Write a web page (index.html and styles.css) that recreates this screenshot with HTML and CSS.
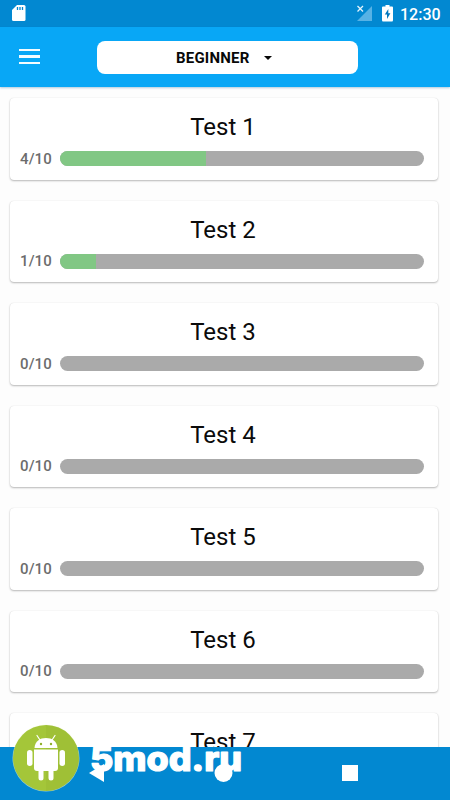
FILE: index.html
```html
<!DOCTYPE html>
<html lang="en">
<head>
<meta charset="utf-8">
<title>Tests</title>
<link rel="stylesheet" href="styles.css">
</head>
<body>
<div class="screen">
  <header class="status">
    <svg class="sd" width="14" height="17" viewBox="0 0 14 17"><path fill="#fff" d="M5 0h7a1.500 1.500 0 0 1 1.500 1.500v13a1.500 1.500 0 0 1-1.500 1.500H1.500A1.500 1.500 0 0 1 0 14.500V5z"/><path stroke="#0288d1" stroke-width="1.300" d="M5.500 2v3M8 2v3M10.500 2v3"/></svg>
    <svg class="signal" width="17" height="17" viewBox="0 0 17 17"><path fill="#57b2e5" d="M16 1v15H1z"/><path fill="#0288d1" d="M0 0h8v8H0z"/><path stroke="#e4f4fc" stroke-width="1.300" d="M1.500 1l5.500 5.500M7 1L1.500 6.500"/></svg>
    <svg class="battery" width="11" height="17" viewBox="0 0 11 17"><path fill="#fff" d="M3.500 0h4v1.500H10q1 0 1 1V15q0 1.500-1 1.500H1Q0 16.500 0 15V2.500q0-1 1-1h2.500z"/><path fill="#0277bd" d="M6.300 4L2.800 9.500H5V14l3.400-5.800H6.300z"/></svg>
    <span class="clock">12:30</span>
  </header>
  <div class="toolbar">
    <div class="burger"><i></i><i></i><i></i></div>
    <div class="level"><span>BEGINNER</span><b class="caret"></b></div>
  </div>
  <main class="list">
    <section class="card"><h2>Test 1</h2><div class="row"><span class="count">4/10</span><div class="bar"><div class="fill" style="width:40%"></div></div></div></section>
    <section class="card"><h2>Test 2</h2><div class="row"><span class="count">1/10</span><div class="bar"><div class="fill" style="width:10%"></div></div></div></section>
    <section class="card"><h2>Test 3</h2><div class="row"><span class="count">0/10</span><div class="bar"></div></div></section>
    <section class="card"><h2>Test 4</h2><div class="row"><span class="count">0/10</span><div class="bar"></div></div></section>
    <section class="card"><h2>Test 5</h2><div class="row"><span class="count">0/10</span><div class="bar"></div></div></section>
    <section class="card"><h2>Test 6</h2><div class="row"><span class="count">0/10</span><div class="bar"></div></div></section>
    <section class="card"><h2>Test 7</h2></section>
  </main>
  <nav class="nav">
    <svg width="450" height="53" viewBox="0 0 450 53"><path fill="#fff" d="M89 26l15-9v18z"/><circle cx="223.500" cy="26" r="9" fill="#fff"/><path fill="#fff" d="M342 18h16v16h-16z"/></svg>
  </nav>
  <div class="watermark">
    <svg class="robot" width="68" height="68" viewBox="0 0 68 68">
      <circle cx="34" cy="34" r="33.500" fill="#f4f8dc" opacity=".6"/>
      <circle cx="34" cy="34" r="33" fill="#a4c639"/>
      <path fill="#8fac2c" d="M34 1a33 33 0 0 1 0 66z" opacity=".22"/>
      <g fill="#fff"><path d="M22.500 24C23 17 28 14 34 14s11 3 11.500 10z"/><path d="M22 25.500h24V44q0 3-3 3H25q-3 0-3-3z"/><rect x="15" y="26" width="5.500" height="16" rx="2.750"/><rect x="47.500" y="26" width="5.500" height="16" rx="2.750"/><rect x="26.500" y="40" width="5" height="16.500" rx="2.500"/><rect x="36.500" y="40" width="5" height="16.500" rx="2.500"/></g>
      <path stroke="#fff" stroke-width="1.200" stroke-linecap="round" d="M28 16l-3-4.500M40 16l3-4.500"/>
      <g fill="#8fb12b"><circle cx="29" cy="20" r="1.200"/><circle cx="39" cy="20" r="1.200"/></g>
    </svg>
    <svg class="brand" width="170" height="60" viewBox="0 0 170 60"><text x="10" y="46.500" textLength="152" lengthAdjust="spacingAndGlyphs">5mod.ru</text></svg>
  </div>
</div>
</body>
</html>
```
FILE: styles.css
```css
* { box-sizing: border-box; }
body { margin: 0; font-family: Roboto, sans-serif; }
.screen { position: relative; width: 450px; height: 800px; overflow: hidden; display: flex; flex-direction: column; background: #fdfdfd; }
.status { flex: none; height: 27px; background: #0288d1; display: flex; align-items: flex-start; padding: 5px 10px 0 11.500px; color: #fff; }
.signal { margin-left: auto; margin-right: 9px; }
.battery { margin-right: 7px; }
.clock { font-size: 16px; font-weight: 500; line-height: 19px; width: 40px; white-space: nowrap; }
.toolbar { flex: none; height: 60px; background: #08a7f6; display: flex; align-items: flex-start; padding: 14px 0 0 18.500px; box-shadow: 0 1px 2px rgba(30, 110, 160, .35); z-index: 1; }
.burger { width: 78px; padding-top: 8px; display: flex; flex-direction: column; gap: 4px; }
.burger i { width: 21px; height: 2.400px; background: #f4fcff; }
.level { width: 261px; height: 32.500px; border-radius: 8px; background: #fff; display: flex; align-items: center; padding: 1px 0 0 79.500px; font-size: 15px; font-weight: 700; letter-spacing: .2px; color: #080808; }
.level span { width: 88px; }
.caret { border: 4px solid transparent; border-top-color: #080808; border-bottom: 0; }
.list { flex: 1; min-height: 0; overflow: hidden; padding: 11px 12.500px 0 9.500px; display: flex; flex-direction: column; gap: 21px; }
.card { flex: none; height: 81.500px; border-radius: 4px; background: #fff; box-shadow: 0 1px 2px rgba(0, 0, 0, .27), 0 0 1px rgba(0, 0, 0, .12); padding: 14px 13.500px 0 10.500px; }
h2 { margin: 0 0 0 2px; font-size: 24px; line-height: 30px; font-weight: 400; text-align: center; color: #0b0b0b; }
.row { display: flex; align-items: center; height: 18px; margin-top: 7.500px; }
.count { width: 40px; font-size: 15px; font-weight: 500; color: #6c6c6c; letter-spacing: .1px; }
.bar { flex: 1; height: 15px; border-radius: 7.500px; overflow: hidden; background: #aaa; }
.fill { height: 100%; background: #81c784; }
.nav { flex: none; height: 53px; background: #0288d1; }
.nav svg { display: block; }
.watermark { position: absolute; left: 12px; top: 724px; display: flex; z-index: 2; }
.brand text { font-family: Inter, sans-serif; font-weight: 800; font-size: 34px; fill: #fff; stroke: #fff; stroke-width: 1.200px; stroke-linejoin: round; }
```
